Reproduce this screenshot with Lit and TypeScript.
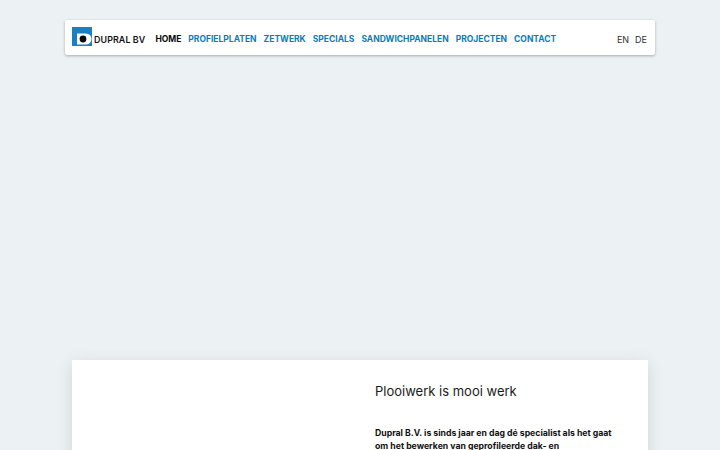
import { LitElement, html, css } from "lit";
import { customElement } from "lit/decorators.js";

@customElement("app-root")
export class AppRoot extends LitElement {
  static styles = css`
    :host {
      display: block;
      height: 450px;
      overflow: hidden;
      background: #ecf1f4;
      font-family: Inter, "Noto Sans", sans-serif;
      color: #0a0a0a;
    }
    .page {
      display: flex;
      flex-direction: column;
      padding: 20px 65px 0;
      gap: 305px;
    }
    nav {
      display: flex;
      align-items: center;
      height: 35px;
      padding: 0 8px 0 7px;
      background: #fff;
      border-radius: 2px;
      box-shadow: 0 1px 3px rgba(10, 10, 10, 0.3);
    }
    .brand {
      display: flex;
      align-items: center;
      gap: 2px;
      font-size: 8.9px;
      font-weight: 600;
      letter-spacing: 0.1px;
      white-space: nowrap;
      color: #111;
    }
    .brand svg { display: block; margin-bottom: 2px; }
    .brand span, .links, .lang { padding-top: 3px; }
    .links {
      display: flex;
      gap: 7px;
      margin-left: 10px;
      font-size: 8.5px;
      font-weight: 700;
      white-space: nowrap;
    }
    .links a { color: #0a7cba; }
    .links a.on { color: #0a0a0a; }
    .lang {
      display: flex;
      gap: 6px;
      margin-left: auto;
      font-size: 9px;
      color: #333;
    }
    .card {
      display: grid;
      grid-template-columns: 303px 1fr;
      margin: 0 7px;
      height: 200px;
      background: #fff;
      box-shadow: 0 4px 16px rgba(10, 10, 10, 0.12);
    }
    .body { padding: 22px 30px 0 0; }
    h1 {
      margin: 0;
      font-size: 13px;
      line-height: 18px;
      font-weight: 400;
      color: #1a1a1a;
    }
    p {
      margin: 27px 0 0;
      font-size: 8.7px;
      line-height: 12.5px;
      font-weight: 700;
      color: #111;
    }
  `;

  render() {
    const links = ["PROFIELPLATEN", "ZETWERK", "SPECIALS", "SANDWICHPANELEN", "PROJECTEN", "CONTACT"];
    return html`
      <div class="page">
        <nav>
          <div class="brand">
            <svg width="20" height="19" viewBox="0 0 20 19" aria-hidden="true">
              <rect width="20" height="19" fill="#1b7fc4" />
              <path d="M5 6.5h9a5.5 5.5 0 0 1 5.5 5.5v0a5.5 5.5 0 0 1-5.5 5.5H5z" fill="#fff" />
              <circle cx="11" cy="12" r="3.4" fill="#0a0a0a" />
            </svg>
            <span>DUPRAL BV</span>
          </div>
          <div class="links">
            <a class="on">HOME</a>
            ${links.map((l) => html`<a>${l}</a>`)}
          </div>
          <div class="lang"><span>EN</span><span>DE</span></div>
        </nav>
        <section class="card">
          <div></div>
          <div class="body">
            <h1>Plooiwerk is mooi werk</h1>
            <p>Dupral B.V. is sinds jaar en dag dé specialist als het gaat<br />om het bewerken van geprofileerde dak- en</p>
          </div>
        </section>
      </div>
    `;
  }
}
